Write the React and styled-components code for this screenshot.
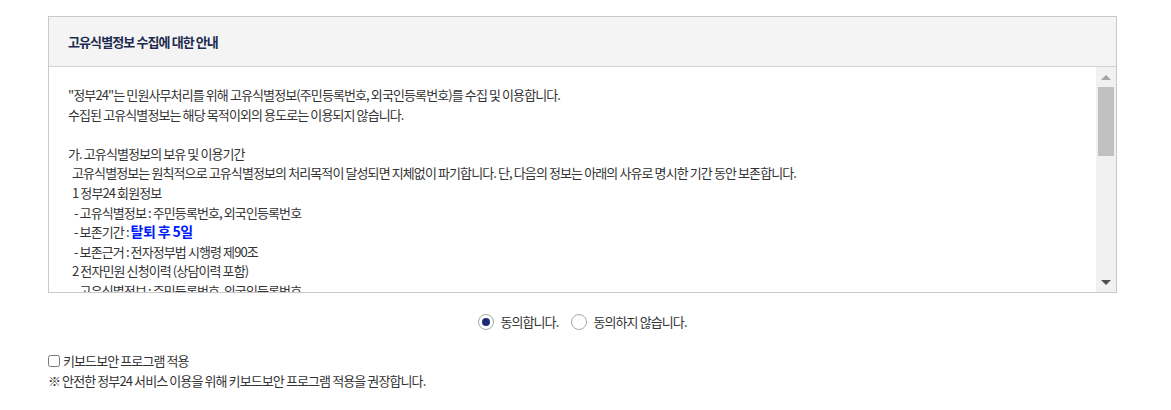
import React, { useState, useRef, useEffect } from "react";
import styled, { createGlobalStyle } from "styled-components";

const GlobalStyle = createGlobalStyle`
  body {
    margin: 0;
    background: #fff;
    font-family: "Noto Sans CJK KR", "Noto Sans", sans-serif;
    color: #333;
  }
`;

const Page = styled.div`
  padding: 16px 0 0 48px;
  width: 1069px;
`;

const AgreeBox = styled.div`
  border: 1px solid #c9c9c9;
`;

const BoxHeader = styled.div`
  height: 49px;
  display: flex;
  align-items: center;
  padding-left: 19px;
  background: #f4f4f4;
  border-bottom: 1px solid #d4d4d4;
`;

const BoxTitle = styled.h3`
  margin: 0;
  font-size: 13px;
  font-weight: 700;
  letter-spacing: -0.9px;
  color: #1c2b4d;
`;

const BoxBody = styled.div`
  display: flex;
  height: 225px;
`;

const Scroller = styled.div`
  flex: 1;
  overflow-y: scroll;
  padding: 18px 19px 20px 19px;
  box-sizing: border-box;
  scrollbar-width: none;

  &::-webkit-scrollbar {
    display: none;
  }
`;

const ScrollTrack = styled.div`
  width: 20px;
  background: #f1f1f1;
  display: flex;
  flex-direction: column;
`;

const ArrowBtn = styled.div`
  height: 20px;
  display: flex;
  align-items: center;
  justify-content: center;

  &::before {
    content: "";
    width: 0;
    height: 0;
    border-left: 5px solid transparent;
    border-right: 5px solid transparent;
    ${(p) =>
      p.$up
        ? "border-bottom: 5px solid #a3a3a3;"
        : "border-top: 5px solid #505050;"}
  }
`;

const ThumbArea = styled.div`
  flex: 1;
  position: relative;
`;

const Thumb = styled.div`
  position: absolute;
  left: 2px;
  right: 2px;
  background: #c1c1c1;
`;

const Line = styled.p`
  margin: 0;
  padding-left: ${(p) => p.$indent || 0}px;
  min-height: 19.6px;
  font-size: 13px;
  line-height: 19.6px;
  letter-spacing: -0.9px;
  color: #333;
  white-space: nowrap;
`;

const Strong = styled.strong`
  color: #0019ff;
  font-size: 14px;
  font-weight: 700;
  letter-spacing: -0.6px;
`;

const RadioRow = styled.div`
  display: flex;
  justify-content: center;
  gap: 13px;
  margin-top: 19px;
`;

const RadioLabel = styled.label`
  display: flex;
  align-items: center;
  gap: 6px;
  font-size: 13px;
  letter-spacing: -0.9px;
  color: #333;
  cursor: pointer;
`;

const RadioMark = styled.span`
  width: 16px;
  height: 16px;
  box-sizing: border-box;
  border: 1px solid #a8a8a8;
  border-radius: 50%;
  display: flex;
  align-items: center;
  justify-content: center;
  background: #fff;

  &::after {
    content: "";
    width: 8px;
    height: 8px;
    border-radius: 50%;
    background: ${(p) => (p.$on ? "#1d2a78" : "transparent")};
  }
`;

const KeyRow = styled.label`
  display: flex;
  align-items: center;
  gap: 3px;
  margin-top: 20px;
  font-size: 13px;
  letter-spacing: -0.9px;
  color: #333;
`;

const Check = styled.input`
  margin: 0;
  width: 12px;
  height: 12px;
`;

const Note = styled.p`
  margin: 1px 0 0;
  font-size: 13px;
  letter-spacing: -0.9px;
  color: #333;
`;

const lines = [
  { t: '"정부24"는 민원사무처리를 위해 고유식별정보(주민등록번호, 외국인등록번호)를 수집 및 이용합니다.' },
  { t: "수집된 고유식별정보는 해당 목적이외의 용도로는 이용되지 않습니다." },
  { t: "" },
  { t: "가. 고유식별정보의 보유 및 이용기간" },
  { t: "고유식별정보는 원칙적으로 고유식별정보의 처리목적이 달성되면 지체없이 파기합니다. 단, 다음의 정보는 아래의 사유로 명시한 기간 동안 보존합니다.", i: 4 },
  { t: "1 정부24 회원정보", i: 4 },
  { t: "- 고유식별정보 : 주민등록번호, 외국인등록번호", i: 6 },
  { t: "- 보존기간 : ", i: 6, strong: "탈퇴 후 5일" },
  { t: "- 보존근거 : 전자정부법 시행령 제90조", i: 6 },
  { t: "2 전자민원 신청이력 (상담이력 포함)", i: 4 },
  { t: "- 고유식별정보 : 주민등록번호, 외국인등록번호", i: 6 },
  { t: "- 보존기간 : 5년", i: 6 },
  { t: "- 보존근거 : 전자정부법 시행령 제90조", i: 6 },
  { t: "3 전자증명서 발급이력", i: 4 },
  { t: "- 고유식별정보 : 주민등록번호, 외국인등록번호", i: 6 },
  { t: "- 보존기간 : 5년", i: 6 },
  { t: "- 보존근거 : 전자정부법 시행령 제90조", i: 6 },
  { t: "" },
  { t: "나. 고유식별정보 수집·이용 근거" },
  { t: "전자정부법 시행령 제90조(고유식별정보의 처리)", i: 4 },
  { t: "개인정보 보호법 제24조(고유식별정보의 처리 제한)", i: 4 },
  { t: "" },
  { t: "다. 동의를 거부할 권리 및 동의를 거부할 경우의 불이익" },
  { t: "귀하는 고유식별정보 수집 및 이용에 대한 동의를 거부할 권리가 있습니다.", i: 4 },
  { t: "다만, 동의를 거부하실 경우 정부24 서비스 이용이 제한될 수 있습니다.", i: 4 },
  { t: "" },
  { t: "※ 고유식별정보는 암호화되어 안전하게 관리됩니다." },
  { t: "※ 자세한 사항은 개인정보처리방침을 참고하시기 바랍니다." },
  { t: "" },
];

export default function App() {
  const [agree, setAgree] = useState(true);
  const [thumb, setThumb] = useState({ top: 0, height: 70 });
  const scrollRef = useRef(null);
  const areaRef = useRef(null);

  const updateThumb = () => {
    const el = scrollRef.current;
    const area = areaRef.current;
    if (!el || !area) return;
    const trackH = area.clientHeight;
    const h = Math.max(20, (el.clientHeight / el.scrollHeight) * trackH);
    const max = el.scrollHeight - el.clientHeight;
    const top = max > 0 ? (el.scrollTop / max) * (trackH - h) : 0;
    setThumb({ top, height: h });
  };

  useEffect(() => {
    updateThumb();
  }, []);

  return (
    <>
      <GlobalStyle />
      <Page>
        <AgreeBox>
          <BoxHeader>
            <BoxTitle>고유식별정보 수집에 대한 안내</BoxTitle>
          </BoxHeader>
          <BoxBody>
            <Scroller ref={scrollRef} onScroll={updateThumb}>
              {lines.map((l, idx) => (
                <Line key={idx} $indent={l.i}>
                  {l.t}
                  {l.strong && <Strong>{l.strong}</Strong>}
                </Line>
              ))}
            </Scroller>
            <ScrollTrack>
              <ArrowBtn $up />
              <ThumbArea ref={areaRef}>
                <Thumb style={{ top: thumb.top, height: thumb.height }} />
              </ThumbArea>
              <ArrowBtn />
            </ScrollTrack>
          </BoxBody>
        </AgreeBox>
        <RadioRow>
          <RadioLabel onClick={() => setAgree(true)}>
            <RadioMark $on={agree} />
            동의합니다.
          </RadioLabel>
          <RadioLabel onClick={() => setAgree(false)}>
            <RadioMark $on={!agree} />
            동의하지 않습니다.
          </RadioLabel>
        </RadioRow>
        <KeyRow>
          <Check type="checkbox" />
          키보드보안 프로그램 적용
        </KeyRow>
        <Note>※ 안전한 정부24 서비스 이용을 위해 키보드보안 프로그램 적용을 권장합니다.</Note>
      </Page>
    </>
  );
}
